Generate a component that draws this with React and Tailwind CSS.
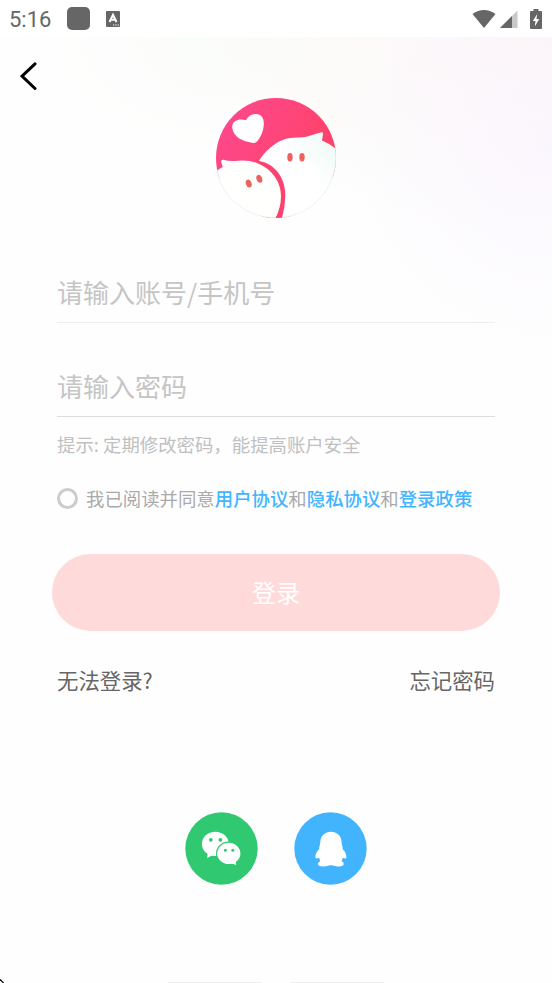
import React, { useState } from "react";

function StatusBar() {
  return (
    <div className="flex h-[37px] items-center bg-white pl-[9px] pr-[10px] text-[#666666]">
      <span className="w-[58px] pt-[2px] font-['Roboto',sans-serif] text-[22px] leading-none">5:16</span>
      <span className="h-[23px] w-[23px] rounded-[5px] bg-[#666666]" />
      <svg className="ml-4 h-4 w-[14px]" viewBox="0 0 14 16">
        <rect width="14" height="16" rx="1" fill="#666" />
        <path d="M3.5 11 7 3.8 10.5 11M4.8 8.7h4.4" fill="none" stroke="#fff" strokeWidth="2" />
        <path d="M7 14h1.3M9.3 14h1.3M11.5 14h1.3" stroke="#fff" strokeWidth="1" />
      </svg>

      <svg className="ml-auto h-[18px] w-[24px]" viewBox="0 0 24 18">
        <path d="M.5 4Q12-4 23.5 4L12 18Z" fill="#666" />
      </svg>
      <svg className="ml-[4px] h-[18px] w-[18px]" viewBox="0 0 18 18">
        <path d="M0 18 17.5.5V18Z" fill="#c8c8c8" />
        <path d="M0 18 12 6v12Z" fill="#666" />
      </svg>
      <svg className="ml-[12px] h-5 w-3" viewBox="0 0 12 20">
        <path d="M3.5 2V0h5v2H11q1 0 1 1v16q0 1-1 1H1q-1 0-1-1V3q0-1 1-1Z" fill="#666" />
        <path d="M7.2 5 2.8 12h2.7L4.8 17.4 9.2 10H6.5Z" fill="#fff" />
      </svg>
    </div>
  );
}

function Logo() {
  return (
    <svg className="h-[120px] w-[120px]" viewBox="0 0 120 120">
      <defs>
        <clipPath id="avatar">
          <circle cx="60" cy="60" r="60" />
        </clipPath>
        <linearGradient id="pink" x1="0" y1="0" x2="1" y2="0.6">
          <stop offset="0" stopColor="#fd4991" />
          <stop offset="1" stopColor="#fd4264" />
        </linearGradient>
        <linearGradient id="cat" x1="1" y1="0" x2="0.6" y2="0.4">
          <stop offset="0" stopColor="#e9faf5" />
          <stop offset="1" stopColor="#fefffe" />
        </linearGradient>
      </defs>
      <g clipPath="url(#avatar)">
        <path d="M0 0H120V80H75V121H50V80H0Z" fill="url(#pink)" />
        {/* Heart */}
        <path
          d="M30 22.2C32 18 36 16 40 16C45.5 16.2 48 20 47.8 26C47.5 33 45.2 38 42.2 42C40.5 44.5 38.8 45.4 36 44.7C30.5 43.6 24 41.8 20.5 38.2C16.8 34.5 15.4 30 16.6 26.5C18.3 22.2 24 20.5 30 22.2Z"
          fill="#fff"
        />
        {/* Back cat */}
        <path
          d="M43.3 62.3C49 53.5 57.5 45.3 68 41.5C77 38.5 84 40.5 92 38.3Q100 35.7 105.5 34.2Q107.3 34 107 36L106 42.5Q115 46 121 52V121H43Z"
          fill="url(#cat)"
        />
        {/* Front cat, outlined by the ring */}
        <path d="M40 62.8C57 63.7 69 78 69.3 97Q69.3 109 65.7 121H45Z" fill="#fc436f" />
        <path
          d="M-1 73.5 6.7 69 5.2 64Q4.8 61.4 7.5 61.7Q13 63.7 22 62.8Q33 61.8 41.5 65.3C56 71 65 84 65 98Q65 110 59 121H-1Z"
          fill="#fffffe"
        />
        <g fill="#ec625f">
          <ellipse cx="74" cy="59.3" rx="2.7" ry="4.2" />
          <ellipse cx="86" cy="59.3" rx="2.7" ry="4.2" />
          <ellipse cx="32.7" cy="85.5" rx="2.8" ry="4.1" transform="rotate(-20 32.7 85.5)" />
          <ellipse cx="43.3" cy="80.8" rx="2.8" ry="4.1" transform="rotate(-20 43.3 80.8)" />
        </g>
      </g>
      <path d="M119.5 55A59.7 59.7 0 0 1 66 119.5M59 119.7A59.7 59.7 0 0 1 .5 73" fill="none" stroke="#e3e9e7" strokeWidth=".6" />
    </svg>
  );
}

function WechatIcon() {
  return (
    <svg className="h-[73px] w-[73px]" viewBox="0 0 73 73">
      <circle cx="36.5" cy="36.5" r="36.2" fill="#30c971" />
      <path d="M23 40 22 46 29 42.5Z" fill="#fff" />
      <ellipse cx="30.3" cy="31.9" rx="13.4" ry="12.1" fill="#fff" />
      <ellipse cx="43.8" cy="41.4" rx="12.8" ry="11.8" fill="#30c971" />
      <ellipse cx="43.8" cy="41.4" rx="11.6" ry="10.6" fill="#fff" />
      <path d="M45.5 51 51.2 53 50.4 48Z" fill="#fff" />
      <g fill="#30c971">
        <circle cx="25.8" cy="27.8" r="1.9" />
        <circle cx="35.4" cy="27.8" r="1.9" />
        <circle cx="40.4" cy="38.2" r="1.5" />
        <circle cx="47.8" cy="38.2" r="1.5" />
      </g>
    </svg>
  );
}

function QQIcon() {
  return (
    <svg className="h-[73px] w-[73px]" viewBox="0 0 73 73">
      <circle cx="36.5" cy="36.5" r="36.2" fill="#42b4fe" />
      <path
        d="M37 19.8C31 19.8 26.6 24 26.3 30Q26.2 32 25.6 33.8Q25 35.5 25.2 37C22.6 39.7 21 43 21.4 45.5Q22 47.4 25 45.7L26.3 49C24.2 50.2 23.4 52 24.5 53.2C26.5 54.8 33 54.8 35.5 53.3H38.3C41 54.8 47 54.8 49.2 53.2C50.3 52 49.6 50.2 47.6 49L48.9 45.7Q51.8 47.4 52.4 45.5C52.8 43 51.2 39.7 48.6 37Q48.8 35.5 48.2 33.8Q47.6 32 47.6 30C47.3 24 43 19.8 37 19.8Z"
        fill="#fff"
      />
    </svg>
  );
}

export default function App() {
  const [agreed, setAgreed] = useState(false);

  return (
    <div className="relative h-[983px] w-[552px] overflow-hidden bg-[#fefefe] font-['Noto_Sans_CJK_SC',sans-serif]">
      <StatusBar />

      <main className="flex h-[946px] flex-col bg-[radial-gradient(ellipse_200px_200px_at_100%_110px,#faf5fecc,#fefefe00),radial-gradient(ellipse_340px_200px_at_100%_0px,#fcf5f6,#fefefe00),radial-gradient(ellipse_260px_150px_at_45%_0px,#fbfdfa,#fefefe00)]">
        {/* Header */}
        <button className="ml-[20px] mt-[25px] h-7 w-[17px]">
          <svg className="h-7 w-[17px]" viewBox="0 0 17 28">
            <path d="M15 1.8 2 14.2 15 26.5" fill="none" stroke="#000" strokeWidth="3" strokeLinecap="round" />
          </svg>
        </button>
        <div className="mt-[8px] flex justify-center">
          <Logo />
        </div>

        {/* Login form */}
        <form className="flex flex-col px-[57px] pt-[45px]">
          <input
            type="text"
            placeholder="请输入账号/手机号"
            className="h-[60px] border-b border-[#eeeeee] bg-transparent pb-[2px] text-[26px] outline-none placeholder:text-[#c5c5c5]"
          />
          <input
            type="password"
            placeholder="请输入密码"
            className="mt-[34px] h-[60px] border-b border-[#dddddd] bg-transparent pb-[2px] text-[26px] outline-none placeholder:text-[#c5c5c5]"
          />
          <p className="mt-[13px] text-[18.4px] leading-[28px] text-[#c0c0c0]">提示: 定期修改密码，能提高账户安全</p>

          <div className="mt-[26px] flex items-center whitespace-nowrap text-[18.4px] leading-[28px] text-[#aaaaaa]">
            <button
              type="button"
              onClick={() => setAgreed(!agreed)}
              className={`mr-[8px] h-[21px] w-[21px] shrink-0 rounded-full border-[3px] border-[#cccccc] ${agreed ? "bg-[#42b4fe]" : ""}`}
            />
            <span>我已阅读并同意</span>
            <a className="font-medium text-[#42b4fe]">用户协议</a>
            <span>和</span>
            <a className="font-medium text-[#42b4fe]">隐私协议</a>
            <span>和</span>
            <a className="font-medium text-[#42b4fe]">登录政策</a>
          </div>

          <button type="button" className="-mx-[5px] mt-[42px] h-[77px] rounded-full bg-[#ffdada] pb-[2px] text-[24px] text-white">
            登录
          </button>

          <div className="mt-[33px] flex justify-between text-[21.4px] leading-[32px] text-[#666666]">
            <a>无法登录?</a>
            <a>忘记密码</a>
          </div>
        </form>

        {/* Third-party login */}
        <div className="mt-[116px] flex justify-center gap-[36px]">
          <WechatIcon />
          <QQIcon />
        </div>

        <div className="mt-auto flex justify-center gap-[30px]">
          <span className="h-px w-[93px] bg-[#eeeeee]" />
          <span className="h-px w-[93px] bg-[#eeeeee]" />
        </div>
      </main>

      <svg className="absolute bottom-0 left-0 h-[4px] w-[4px]" viewBox="0 0 4 4">
        <path d="M0 .5 3.5 4" stroke="#000" strokeWidth="1.2" />
      </svg>
    </div>
  );
}
